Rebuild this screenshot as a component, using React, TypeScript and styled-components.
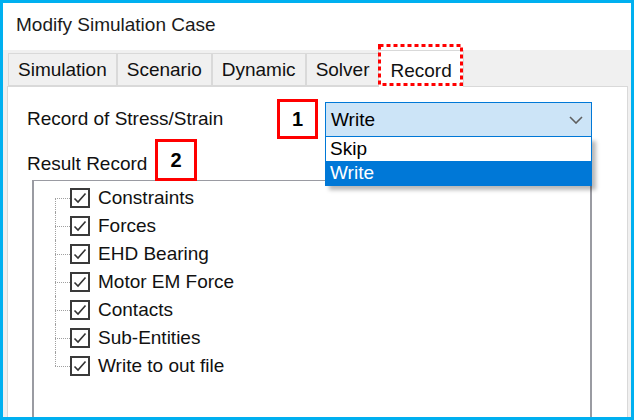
import styled, { createGlobalStyle } from "styled-components";

const GlobalStyle = createGlobalStyle`
  html, body {
    margin: 0;
    padding: 0;
    background: #ffffff;
  }
  body {
    font-family: "Liberation Sans", Arial, sans-serif;
  }
`;

const tabs = ["Simulation", "Scenario", "Dynamic", "Solver", "Record"];

const records = [
  "Constraints",
  "Forces",
  "EHD Bearing",
  "Motor EM Force",
  "Contacts",
  "Sub-Entities",
  "Write to out file",
];

export default function App() {
  return (
    <>
      <GlobalStyle />
      <Window>
        <TitleBar>Modify Simulation Case</TitleBar>
        <TabStrip>
          {tabs.map((t) => (
            <Tab key={t} $active={t === "Record"}>
              {t}
              {t === "Record" && (
                <Highlight viewBox="0 0 85 42" preserveAspectRatio="none">
                  <rect x="1.5" y="1.5" width="82" height="39" fill="none" stroke="#ff0000" strokeWidth="3" strokeDasharray="4 3" />
                </Highlight>
              )}
            </Tab>
          ))}
        </TabStrip>
        <Panel>
          <FieldRow>
            <Label>Record of Stress/Strain</Label>
            <ComboWrap>
              <Combo>
                <span>Write</span>
                <svg width="14" height="8" viewBox="0 0 14 8">
                  <path d="M1 1 L7 7 L13 1" fill="none" stroke="#5f5f5f" strokeWidth="1.6" />
                </svg>
              </Combo>
              <DropList>
                <Option>Skip</Option>
                <Option $selected>Write</Option>
              </DropList>
            </ComboWrap>
          </FieldRow>
          <SectionLabel>Result Record</SectionLabel>
          <Tree>
            {records.map((r, i) => (
              <TreeRow key={r}>
                <Connector $first={i === 0} $last={i === records.length - 1} />
                <CheckBox>
                  <svg width="16" height="16" viewBox="0 0 16 16">
                    <path d="M2.5 8.5 L6 12 L13.5 3.5" fill="none" stroke="#333333" strokeWidth="1.6" />
                  </svg>
                </CheckBox>
                <ItemText>{r}</ItemText>
              </TreeRow>
            ))}
          </Tree>
          <Callout $left={269} $top={12} $w={41} $h={40}>1</Callout>
          <Callout $left={147} $top={52} $w={42} $h={42}>2</Callout>
        </Panel>
      </Window>
    </>
  );
}

const Window = styled.div`
  width: 634px;
  height: 420px;
  box-sizing: border-box;
  border: 3px solid #00b0f0;
  background: #f0f0f0;
  display: flex;
  flex-direction: column;
  overflow: hidden;
  color: #111111;
`;

const TitleBar = styled.div`
  height: 47px;
  flex: 0 0 47px;
  background: #ffffff;
  display: flex;
  align-items: center;
  padding: 0 0 4px 13px;
  box-sizing: border-box;
  font-size: 19px;
  color: #1a1a1a;
`;

const TabStrip = styled.div`
  height: 36px;
  flex: 0 0 36px;
  display: flex;
  align-items: flex-end;
  padding-left: 5px;
  position: relative;
  z-index: 2;
`;

const Tab = styled.div<{ $active?: boolean }>`
  position: relative;
  box-sizing: border-box;
  height: ${(p) => (p.$active ? "37px" : "33px")};
  margin-bottom: ${(p) => (p.$active ? "-1px" : "0")};
  margin-left: ${(p) => (p.$active ? "-1px" : "0")};
  padding: ${(p) => (p.$active ? "3px 11px 0" : "1px 9px 0")};
  display: flex;
  align-items: center;
  font-size: 19px;
  background: ${(p) => (p.$active ? "#ffffff" : "#f0f0f0")};
  border: 1px solid #d9d9d9;
  border-bottom: ${(p) => (p.$active ? "none" : "1px solid #d9d9d9")};
  & + & {
    border-left: ${(p) => (p.$active ? "1px solid #d9d9d9" : "none")};
  }
`;

const Highlight = styled.svg`
  position: absolute;
  left: -1px;
  top: -7px;
  width: 85px;
  height: 42px;
`;

const Panel = styled.div`
  flex: 1;
  position: relative;
  margin: 0 3px 0 4px;
  background: #ffffff;
  border: 1px solid #d9d9d9;
  border-bottom: none;
  padding: 15px 0 0 19px;
  overflow: hidden;
`;

const FieldRow = styled.div`
  display: flex;
  align-items: center;
  height: 35px;
`;

const Label = styled.div`
  width: 298px;
  font-size: 19px;
  padding-bottom: 2px;
`;

const ComboWrap = styled.div`
  position: relative;
  width: 267px;
  height: 35px;
  z-index: 3;
`;

const Combo = styled.div`
  box-sizing: border-box;
  height: 35px;
  background: #cce4f7;
  border: 1px solid #0078d7;
  display: flex;
  align-items: center;
  justify-content: space-between;
  padding: 0 8px 0 5px;
  font-size: 19px;
  color: #000000;
`;

const DropList = styled.div`
  position: absolute;
  top: 35px;
  left: 0;
  width: 267px;
  box-sizing: border-box;
  border: 1px solid #0078d7;
  border-top: none;
  background: #ffffff;
  box-shadow: 4px 4px 4px rgba(0, 0, 0, 0.28);
`;

const Option = styled.div<{ $selected?: boolean }>`
  height: 24px;
  line-height: 24px;
  padding-left: 4px;
  font-size: 19px;
  background: ${(p) => (p.$selected ? "#0078d7" : "#ffffff")};
  color: ${(p) => (p.$selected ? "#ffffff" : "#000000")};
`;

const SectionLabel = styled.div`
  margin-top: 15px;
  height: 24px;
  line-height: 24px;
  font-size: 19px;
`;

const Tree = styled.div`
  margin: 4px 0 0 5px;
  width: 560px;
  height: 260px;
  box-sizing: border-box;
  border: 1px solid #9a9ba2;
  border-left-width: 2px;
  border-right-width: 2px;
  border-bottom: none;
  padding: 3px 0 0 21px;
`;

const TreeRow = styled.div`
  display: flex;
  align-items: center;
  height: 28px;
`;

const Connector = styled.div<{ $first?: boolean; $last?: boolean }>`
  position: relative;
  width: 15px;
  height: 28px;
  &::before {
    content: "";
    position: absolute;
    left: 0;
    top: ${(p) => (p.$first ? "14px" : "0")};
    bottom: ${(p) => (p.$last ? "14px" : "0")};
    border-left: 1px dotted #a0a0a0;
  }
  &::after {
    content: "";
    position: absolute;
    left: 0;
    right: 0;
    top: 14px;
    border-top: 1px dotted #a0a0a0;
  }
`;

const CheckBox = styled.div`
  width: 20px;
  height: 20px;
  box-sizing: border-box;
  border: 2px solid #3a3a3a;
  display: flex;
  align-items: center;
  justify-content: center;
  background: #ffffff;
`;

const ItemText = styled.span`
  margin-left: 8px;
  font-size: 19px;
  color: #111111;
`;

const Callout = styled.div<{ $left: number; $top: number; $w: number; $h: number }>`
  position: absolute;
  left: ${(p) => p.$left}px;
  top: ${(p) => p.$top}px;
  width: ${(p) => p.$w}px;
  height: ${(p) => p.$h}px;
  box-sizing: border-box;
  border: 3px solid #ff0000;
  display: flex;
  align-items: center;
  justify-content: center;
  font-size: 20px;
  font-weight: bold;
  color: #000000;
  z-index: 4;
`;
